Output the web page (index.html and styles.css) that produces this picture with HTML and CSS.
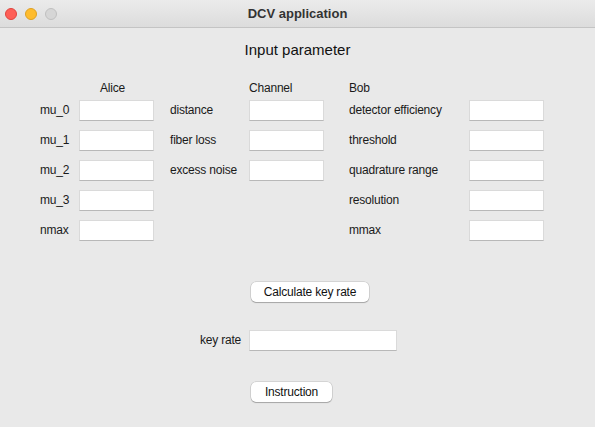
FILE: index.html
```html
<!DOCTYPE html>
<html>
<head>
<meta charset="utf-8">
<link rel="stylesheet" href="styles.css">
</head>
<body>
<div class="window">
  <div class="titlebar">
    <div class="lights">
      <span class="light red"></span>
      <span class="light yellow"></span>
      <span class="light gray"></span>
    </div>
    <div class="wtitle">DCV application</div>
  </div>
  <div class="content">
    <div class="heading">Input parameter</div>
    <div class="grid heads">
      <div></div>
      <div class="h-alice">Alice</div>
      <div></div>
      <div>Channel</div>
      <div class="pad3">Bob</div>
      <div></div>
    </div>
    <div class="grid rows">
      <div class="lbl">mu_0</div><div class="field"></div>
      <div class="lbl pad2">distance</div><div class="field"></div>
      <div class="lbl pad3">detector efficiency</div><div class="field"></div>

      <div class="lbl">mu_1</div><div class="field"></div>
      <div class="lbl pad2">fiber loss</div><div class="field"></div>
      <div class="lbl pad3">threshold</div><div class="field"></div>

      <div class="lbl">mu_2</div><div class="field"></div>
      <div class="lbl pad2">excess noise</div><div class="field"></div>
      <div class="lbl pad3">quadrature range</div><div class="field"></div>

      <div class="lbl">mu_3</div><div class="field"></div>
      <div></div><div></div>
      <div class="lbl pad3">resolution</div><div class="field"></div>

      <div class="lbl">nmax</div><div class="field"></div>
      <div></div><div></div>
      <div class="lbl pad3">mmax</div><div class="field"></div>
    </div>
    <div class="btnrow calc"><div class="btn btn-calc">Calculate key rate</div></div>
    <div class="keyrow">
      <div class="lbl klbl">key rate</div>
      <div class="field kfield"></div>
    </div>
    <div class="btnrow instr"><div class="btn btn-instr">Instruction</div></div>
  </div>
</div>
</body>
</html>
```
FILE: styles.css
```css
html, body {
  margin: 0;
  padding: 0;
  background: #e9e9e9;
}
body {
  font-family: "Liberation Sans", Arial, sans-serif;
  font-size: 12px;
  color: #1a1a1a;
  letter-spacing: -0.2px;
}
.window {
  width: 595px;
  height: 427px;
  background: #e9e9e9;
  overflow: hidden;
}
.titlebar {
  height: 27px;
  border-bottom: 1px solid #c4c4c4;
  background: linear-gradient(#ebebeb, #dcdcdc);
  display: flex;
  align-items: center;
  position: relative;
}
.lights {
  display: flex;
  gap: 8px;
  padding-left: 5px;
}
.light {
  width: 12px;
  height: 12px;
  border-radius: 50%;
  box-sizing: border-box;
}
.red { background: #fe5f57; border: 0.5px solid #e0443e; }
.yellow { background: #febc2e; border: 0.5px solid #dea123; }
.gray { background: #d6d6d6; border: 0.5px solid #c0c0c0; }
.wtitle {
  position: absolute;
  left: 0;
  right: 0;
  top: 0;
  line-height: 27px;
  text-align: center;
  font-weight: bold;
  font-size: 13px;
  letter-spacing: 0;
  color: #333;
  pointer-events: none;
}
.content {
  padding-left: 40px;
}
.heading {
  font-size: 15px;
  line-height: 20px;
  margin-top: 12px;
  text-align: center;
  padding-right: 40px;
  letter-spacing: 0;
  color: #111;
}
.grid {
  display: grid;
  grid-template-columns: 39px 75px 95px 75px 145px 75px;
}
.heads {
  margin-top: 20px;
  line-height: 16px;
  height: 16px;
}
.h-alice { padding-left: 21px; }
.rows {
  margin-top: 4px;
  grid-auto-rows: 21px;
  row-gap: 9px;
}
.lbl {
  line-height: 21px;
  white-space: nowrap;
}
.pad2 { padding-left: 16px; }
.pad3 { padding-left: 25px; }
.field {
  background: #fff;
  box-sizing: border-box;
  height: 21px;
  border: 1px solid #dadada;
  border-bottom-color: #b8b8b8;
}
.btnrow {
  padding-left: 211px;
  display: flex;
}
.calc { margin-top: 41px; }
.instr { margin-top: 31px; }
.btn {
  background: #fff;
  border-radius: 5px;
  height: 20px;
  line-height: 20px;
  text-align: center;
  box-shadow: 0 0 0 0.5px rgba(0,0,0,0.18), 0 1px 1px rgba(0,0,0,0.22);
  color: #111;
}
.btn-calc { width: 118px; }
.btn-instr { width: 81px; }
.keyrow {
  margin-top: 28px;
  display: flex;
  padding-left: 160px;
}
.klbl { width: 49px; }
.kfield { width: 148px; }
```
